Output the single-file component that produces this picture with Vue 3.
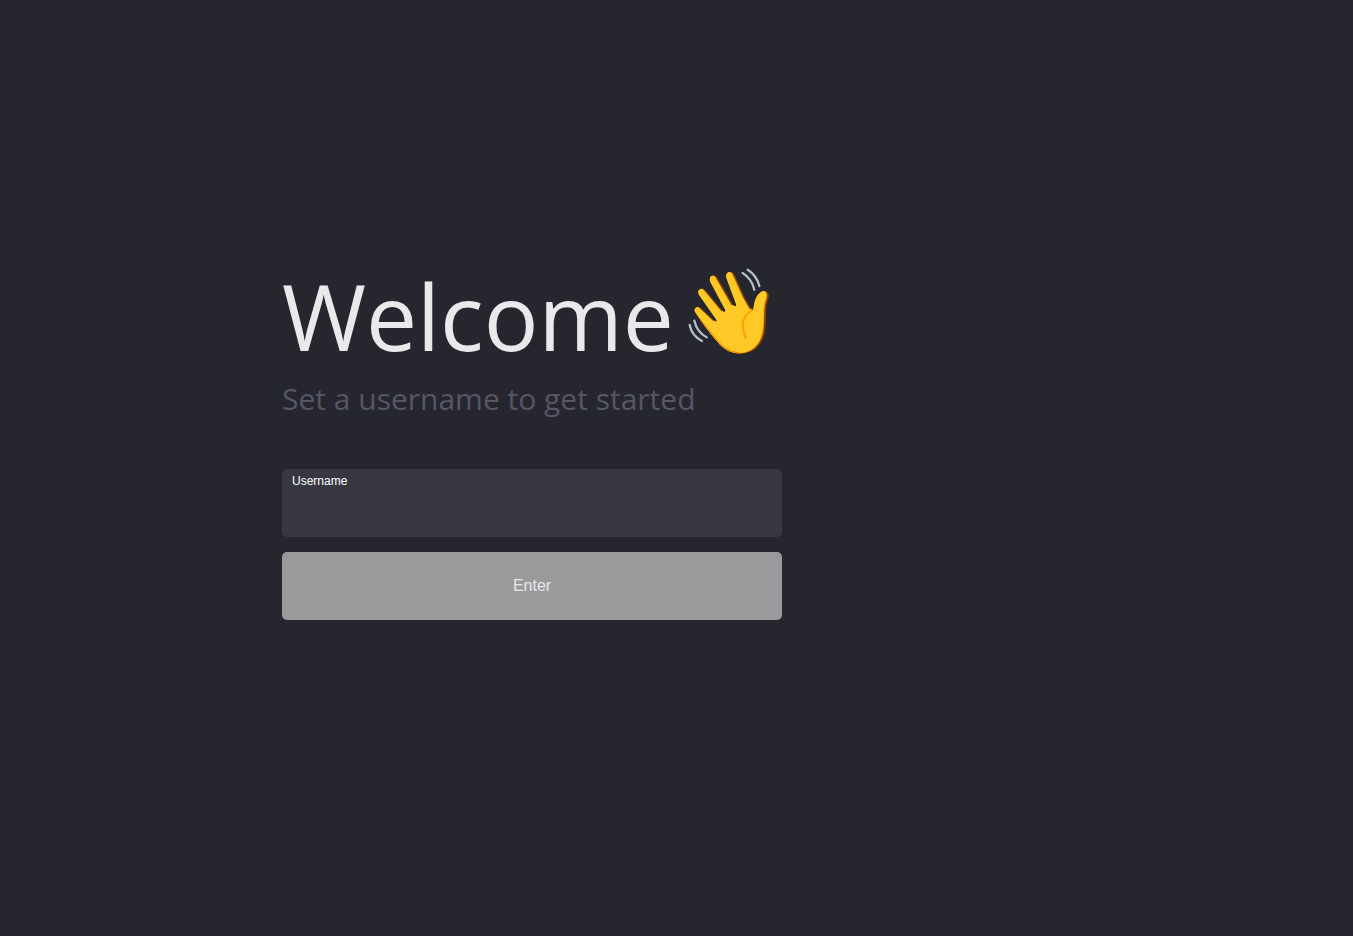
<script setup>
import { ref } from 'vue'

const username = ref('')
</script>

<template>
  <main class="page">
    <section class="welcome">
      <h1 class="title">
        <span>Welcome</span>
        <svg class="wave" viewBox="24 24 246 264" role="img" aria-label="Waving hand">
          <defs>
            <path
              id="hand"
              d="M46 157 C38 147 51 136 63 144 L105 184 Q112 187 110 180 L57 104 C49 88 66 80 77 91 L130 155 Q138 158 135 148 L91 65 C84 46 104 41 113 54 L160 136 Q169 142 169 134 L139 53 C134 34 157 30 164 45 L194 112 L216 151 Q221 152 221 143 C224 115 236 94 254 93 C267 94 269 106 264 120 C255 145 260 171 256 206 C251 254 222 283 181 281 C146 280 126 262 107 239 Q76 204 46 157 Z"
            />
            <clipPath id="handClip"><use href="#hand" /></clipPath>
            <filter id="shade" x="-20%" y="-20%" width="140%" height="140%">
              <feGaussianBlur stdDeviation="2" />
            </filter>
          </defs>
          <use href="#hand" fill="#7d4208" />
          <g clip-path="url(#handClip)">
            <use href="#hand" x="-5" y="-1" fill="#f59a0a" filter="url(#shade)" />
            <use href="#hand" x="-8" y="-2" fill="#ffca28" filter="url(#shade)" />
            <path d="M38 151 L110 240 Q140 278 181 280" fill="none" stroke="#f39a08" stroke-width="5" />
          </g>
          <path
            d="M216 151 C188 166 180 196 198 234"
            fill="none"
            stroke="#ffa000"
            stroke-width="6"
            stroke-linecap="round"
          />
          <g fill="none" stroke="#b0bec5" stroke-width="7" stroke-linecap="round">
            <path d="M188 39 Q216 57 223 89" />
            <path d="M203 29 Q230 46 238 78" />
            <path d="M43 182 Q51 216 80 232" />
            <path d="M29 195 Q36 228 66 243" />
          </g>
        </svg>
      </h1>
      <p class="subtitle">Set a username to get started</p>
      <form class="form" @submit.prevent>
        <div class="field">
          <label class="label" for="username">Username</label>
          <input id="username" v-model="username" class="input" type="text" autocomplete="off" />
        </div>
        <button class="enter" type="submit">Enter</button>
      </form>
    </section>
  </main>
</template>

<style>
body {
  margin: 0;
  background: #26262f;
}
</style>

<style scoped>
.page {
  box-sizing: border-box;
  min-height: 100vh;
  display: flex;
  align-items: center;
  justify-content: center;
  padding-bottom: 60px;
  border-bottom: 1px solid #281f2c;
  background: #26262f;
  font-family: "Segoe UI", "Open Sans", "Noto Sans", sans-serif;
}

.welcome {
  width: 100%;
  max-width: 789px;
}

.title {
  display: flex;
  align-items: center;
  gap: 14px;
  margin: 0;
  color: #e9e9eb;
  font-size: 91px;
  font-weight: 400;
  line-height: 122px;
}

.wave {
  width: 82px;
  height: 88px;
  margin-bottom: 8px;
}

.subtitle {
  margin: 0;
  color: #565666;
  font-size: 30px;
  line-height: 44px;
}

.form {
  display: flex;
  flex-direction: column;
  gap: 15px;
  max-width: 500px;
  margin-top: 48px;
}

.field {
  box-sizing: border-box;
  display: flex;
  flex-direction: column;
  height: 68px;
  padding: 5px 10px;
  border-radius: 5px;
  background: #383843;
}

.label {
  color: #fff;
  font-family: "Liberation Sans", Arial, sans-serif;
  font-size: 12px;
  line-height: 14px;
}

.input {
  flex: 1;
  min-width: 0;
  padding: 0;
  border: 0;
  outline: 0;
  background: transparent;
  color: #fff;
  font-family: "Liberation Sans", Arial, sans-serif;
  font-size: 16px;
}

.enter {
  height: 68px;
  border: 0;
  border-radius: 5px;
  background: #9a9a9c;
  color: #e9e9eb;
  font-family: "Liberation Sans", Arial, sans-serif;
  font-size: 16px;
  cursor: pointer;
}
</style>
